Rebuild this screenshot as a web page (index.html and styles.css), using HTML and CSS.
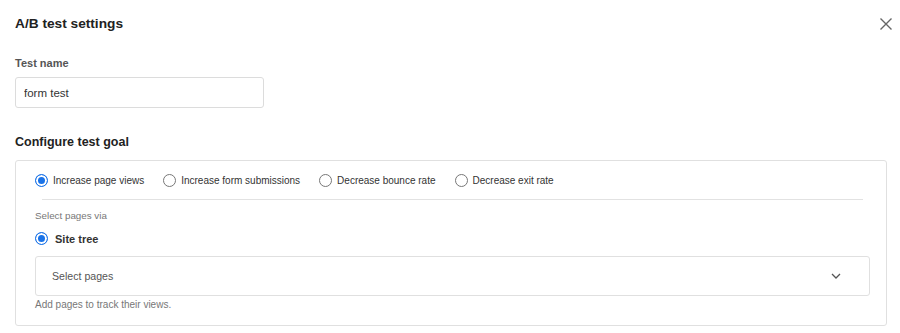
FILE: index.html
```html
<!DOCTYPE html>
<html lang="en">
<head>
    <meta charset="UTF-8">
    <meta name="viewport" content="width=device-width, initial-scale=1.0">
    <title>A/B test settings</title>
    <link rel="stylesheet" href="styles.css">
</head>
<body>
    <div class="modal">
        <header class="modal-header">
            <h1>A/B test settings</h1>
            <button class="close" aria-label="Close">
                <svg width="14" height="14" viewBox="0 0 14 14"><path d="M1.5 1.5 L12.5 12.5 M12.5 1.5 L1.5 12.5" stroke="#666" stroke-width="1.4" fill="none"/></svg>
            </button>
        </header>

        <label class="field-label" for="testName">Test name</label>
        <input type="text" id="testName" class="text-input" value="form test">

        <h2 class="section-title">Configure test goal</h2>
        <div class="goal-box">
            <div class="goal-options">
                <label class="radio"><span class="dot checked"></span>Increase page views</label>
                <label class="radio"><span class="dot"></span>Increase form submissions</label>
                <label class="radio"><span class="dot"></span>Decrease bounce rate</label>
                <label class="radio"><span class="dot"></span>Decrease exit rate</label>
            </div>
            <div class="divider"></div>
            <p class="hint">Select pages via</p>
            <label class="radio radio-big"><span class="dot checked"></span>Site tree</label>
            <div class="select">
                <span>Select pages</span>
                <svg width="10" height="6" viewBox="0 0 10 6"><path d="M1 1 L5 5 L9 1" stroke="#555" stroke-width="1.3" fill="none"/></svg>
            </div>
            <p class="hint hint-below">Add pages to track their views.</p>
        </div>
    </div>
</body>
</html>
```

FILE: styles.css
```css
body {
    margin: 0;
    padding: 0;
    background: #ffffff;
    font-family: "Liberation Sans", Arial, sans-serif;
    color: #222;
}

.modal {
    padding: 0 7px 0 15px;
}

.modal-header {
    display: flex;
    align-items: center;
    justify-content: space-between;
    height: 47px;
}

.modal-header h1 {
    margin: 0;
    font-size: 13.7px;
    font-weight: 700;
    color: #222;
}

.close {
    border: none;
    background: none;
    padding: 0;
    display: flex;
    cursor: pointer;
}

.field-label {
    display: block;
    margin-top: 10px;
    font-size: 11px;
    font-weight: 700;
    color: #555;
}

.text-input {
    display: block;
    box-sizing: border-box;
    margin-top: 8px;
    width: 249px;
    height: 31px;
    padding: 0 8px;
    border: 1px solid #dcdcdc;
    border-radius: 3px;
    font-family: inherit;
    font-size: 11.5px;
    color: #333;
}

.section-title {
    margin: 27px 0 0;
    font-size: 12.5px;
    font-weight: 700;
    color: #222;
}

.goal-box {
    margin-top: 11px;
    width: 872px;
    box-sizing: border-box;
    border: 1px solid #e0e0e0;
    border-radius: 3px;
    padding: 13px 16px 15px 19px;
}

.goal-options {
    display: flex;
    gap: 19px;
}

.radio {
    display: flex;
    align-items: center;
    gap: 5px;
    font-size: 10px;
    color: #333;
}

.dot {
    width: 13px;
    height: 13px;
    box-sizing: border-box;
    border: 1px solid #777;
    border-radius: 50%;
    background: #fff;
}

.dot.checked {
    border: 1.5px solid #1a73e8;
    box-shadow: inset 0 0 0 2px #fff;
    background: #1a73e8;
}

.divider {
    height: 1px;
    background: #e2e2e2;
    margin: 12px 7px 0 7px;
}

.hint {
    margin: 10px 0 0;
    font-size: 9.8px;
    color: #777;
}

.radio-big {
    margin-top: 11px;
    gap: 7px;
    font-size: 11px;
    font-weight: 700;
    color: #333;
}

.select {
    display: flex;
    align-items: center;
    justify-content: space-between;
    margin-top: 11px;
    height: 40px;
    box-sizing: border-box;
    border: 1px solid #e0e0e0;
    border-radius: 3px;
    padding: 0 28px 0 16px;
    font-size: 10.6px;
    color: #555;
}

.hint-below {
    margin-top: 3px;
    font-size: 10px;
}
```
